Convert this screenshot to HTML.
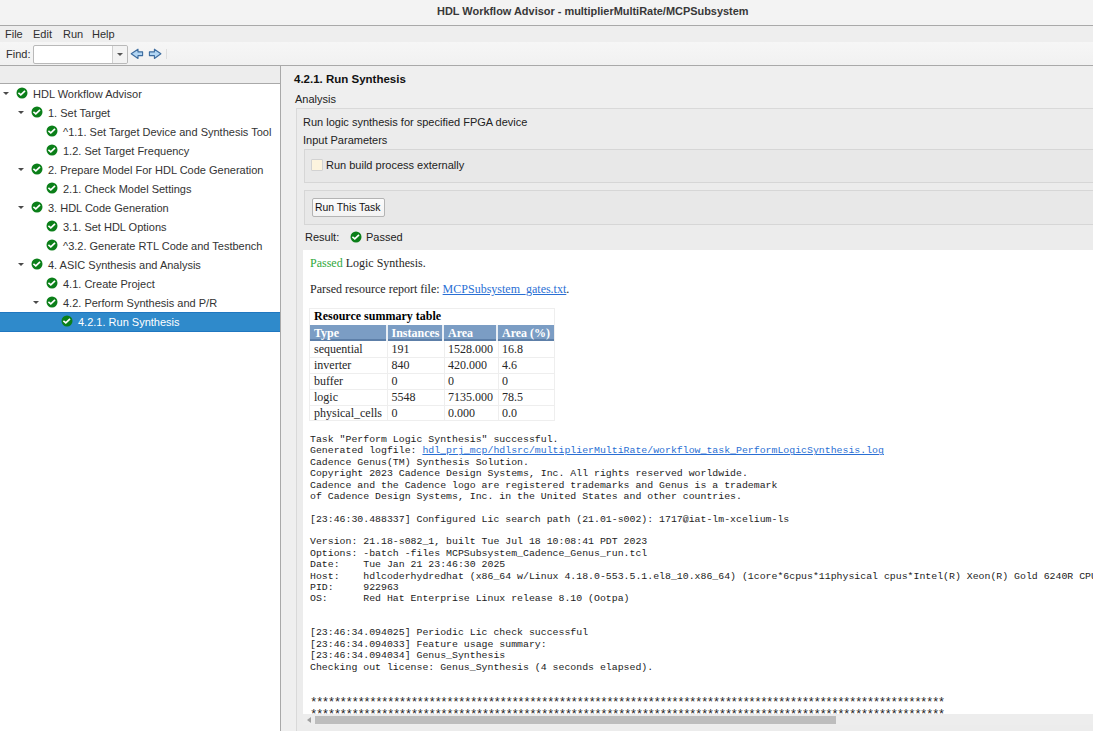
<!DOCTYPE html>
<html><head><meta charset="utf-8">
<style>
html,body{margin:0;padding:0;}
body{width:1093px;height:731px;overflow:hidden;position:relative;background:#efefef;font-family:"Liberation Sans",sans-serif;font-size:11px;color:#2e2e2e;}
.a{position:absolute;white-space:pre;line-height:13px;}
.bx{position:absolute;box-sizing:border-box;}
.ic{position:absolute;width:12px;height:12px;}
.exp{position:absolute;width:0;height:0;border-left:3px solid transparent;border-right:3px solid transparent;border-top:3.5px solid #4a4a4a;}
.tr{position:absolute;white-space:pre;line-height:13px;color:#333;}
.ser{position:absolute;white-space:pre;font-family:"Liberation Serif",serif;font-size:12px;line-height:14px;color:#262626;}
.mono{position:absolute;left:310px;top:434px;white-space:pre;font-family:"Liberation Mono",monospace;font-size:9.87px;line-height:11.37px;color:#222;}
table.rs{position:absolute;left:309px;top:308px;border-collapse:collapse;font-family:"Liberation Serif",serif;font-size:12px;color:#111;}
</style></head><body>
<!-- title bar -->
<div class="bx" style="left:0;top:0;width:1093px;height:26px;background:#f3f3f3;border-bottom:1px solid #a9a9a9;"></div>
<div class="a" style="left:437px;top:5px;font-weight:bold;font-size:10.95px;color:#383838;">HDL Workflow Advisor - multiplierMultiRate/MCPSubsystem</div>
<!-- menu bar -->
<div class="bx" style="left:0;top:26px;width:1093px;height:16px;background:#eeeeee;"></div>
<div class="a" style="left:5px;top:28px;">File</div>
<div class="a" style="left:33px;top:28px;">Edit</div>
<div class="a" style="left:63px;top:28px;">Run</div>
<div class="a" style="left:92px;top:28px;">Help</div>
<!-- toolbar -->
<div class="bx" style="left:0;top:42px;width:1093px;height:24px;background:linear-gradient(#f6f6f6,#f1f1f1);border-bottom:1px solid #a9a9a9;"></div>
<div class="a" style="left:6px;top:48px;">Find:</div>
<div class="bx" style="left:33px;top:45px;width:95px;height:19px;background:#fff;border:1px solid #b9b9b9;border-radius:2px;"></div>
<div class="bx" style="left:112px;top:46px;width:15px;height:17px;background:#f3f3f3;border-left:1px solid #d0d0d0;border-radius:0 2px 2px 0;"></div>
<div class="exp" style="left:117px;top:53px;border-top-color:#555;"></div>
<svg class="ic" style="left:130px;top:48px;width:14px;height:12px" viewBox="0 0 14 12"><path d="M1.2 5.8 L8 1.2 L8 3.9 L12.6 3.9 L12.6 7.6 L8 7.6 L8 10.5 Z" fill="#b3d6f3" stroke="#3d6c9f" stroke-width="1.1" stroke-linejoin="round"/></svg>
<svg class="ic" style="left:148px;top:48px;width:14px;height:12px" viewBox="0 0 14 12"><path d="M12.9 5.8 L6.4 1.2 L6.4 3.9 L1.4 3.9 L1.4 7.6 L6.4 7.6 L6.4 10.5 Z" fill="#b3d6f3" stroke="#3d6c9f" stroke-width="1.1" stroke-linejoin="round"/></svg>
<div class="bx" style="left:166px;top:49px;width:1px;height:10px;background:#dedede;"></div>

<!-- left panel -->
<div class="bx" style="left:0;top:66px;width:281px;height:18px;background:#ededed;border-bottom:1px solid #a9a9a9;"></div>
<div class="bx" style="left:0;top:84px;width:280px;height:647px;background:#ffffff;"></div>
<div class="bx" style="left:280px;top:65px;width:1px;height:666px;background:#a9a9a9;"></div>
<div class="exp" style="left:2.7px;top:91.9px"></div>
<svg class="ic" style="left:16.0px;top:87.4px" viewBox="0 0 12 12"><circle cx="6" cy="6" r="5.5" fill="#0b7f19"/><path d="M2.4 5.9 L4.8 7.8 L9.0 3.9" fill="none" stroke="#fff" stroke-width="1.7"/></svg>
<div class="tr" style="left:33px;top:87.5px;color:#333333">HDL Workflow Advisor</div>
<div class="exp" style="left:17.7px;top:110.9px"></div>
<svg class="ic" style="left:31.0px;top:106.4px" viewBox="0 0 12 12"><circle cx="6" cy="6" r="5.5" fill="#0b7f19"/><path d="M2.4 5.9 L4.8 7.8 L9.0 3.9" fill="none" stroke="#fff" stroke-width="1.7"/></svg>
<div class="tr" style="left:48px;top:106.5px;color:#333333">1. Set Target</div>
<svg class="ic" style="left:46.0px;top:125.4px" viewBox="0 0 12 12"><circle cx="6" cy="6" r="5.5" fill="#0b7f19"/><path d="M2.4 5.9 L4.8 7.8 L9.0 3.9" fill="none" stroke="#fff" stroke-width="1.7"/></svg>
<div class="tr" style="left:63px;top:125.5px;color:#333333">^1.1. Set Target Device and Synthesis Tool</div>
<svg class="ic" style="left:46.0px;top:144.4px" viewBox="0 0 12 12"><circle cx="6" cy="6" r="5.5" fill="#0b7f19"/><path d="M2.4 5.9 L4.8 7.8 L9.0 3.9" fill="none" stroke="#fff" stroke-width="1.7"/></svg>
<div class="tr" style="left:63px;top:144.5px;color:#333333">1.2. Set Target Frequency</div>
<div class="exp" style="left:17.7px;top:167.9px"></div>
<svg class="ic" style="left:31.0px;top:163.4px" viewBox="0 0 12 12"><circle cx="6" cy="6" r="5.5" fill="#0b7f19"/><path d="M2.4 5.9 L4.8 7.8 L9.0 3.9" fill="none" stroke="#fff" stroke-width="1.7"/></svg>
<div class="tr" style="left:48px;top:163.5px;color:#333333">2. Prepare Model For HDL Code Generation</div>
<svg class="ic" style="left:46.0px;top:182.4px" viewBox="0 0 12 12"><circle cx="6" cy="6" r="5.5" fill="#0b7f19"/><path d="M2.4 5.9 L4.8 7.8 L9.0 3.9" fill="none" stroke="#fff" stroke-width="1.7"/></svg>
<div class="tr" style="left:63px;top:182.5px;color:#333333">2.1. Check Model Settings</div>
<div class="exp" style="left:17.7px;top:205.9px"></div>
<svg class="ic" style="left:31.0px;top:201.4px" viewBox="0 0 12 12"><circle cx="6" cy="6" r="5.5" fill="#0b7f19"/><path d="M2.4 5.9 L4.8 7.8 L9.0 3.9" fill="none" stroke="#fff" stroke-width="1.7"/></svg>
<div class="tr" style="left:48px;top:201.5px;color:#333333">3. HDL Code Generation</div>
<svg class="ic" style="left:46.0px;top:220.4px" viewBox="0 0 12 12"><circle cx="6" cy="6" r="5.5" fill="#0b7f19"/><path d="M2.4 5.9 L4.8 7.8 L9.0 3.9" fill="none" stroke="#fff" stroke-width="1.7"/></svg>
<div class="tr" style="left:63px;top:220.5px;color:#333333">3.1. Set HDL Options</div>
<svg class="ic" style="left:46.0px;top:239.4px" viewBox="0 0 12 12"><circle cx="6" cy="6" r="5.5" fill="#0b7f19"/><path d="M2.4 5.9 L4.8 7.8 L9.0 3.9" fill="none" stroke="#fff" stroke-width="1.7"/></svg>
<div class="tr" style="left:63px;top:239.5px;color:#333333">^3.2. Generate RTL Code and Testbench</div>
<div class="exp" style="left:17.7px;top:262.9px"></div>
<svg class="ic" style="left:31.0px;top:258.4px" viewBox="0 0 12 12"><circle cx="6" cy="6" r="5.5" fill="#0b7f19"/><path d="M2.4 5.9 L4.8 7.8 L9.0 3.9" fill="none" stroke="#fff" stroke-width="1.7"/></svg>
<div class="tr" style="left:48px;top:258.5px;color:#333333">4. ASIC Synthesis and Analysis</div>
<svg class="ic" style="left:46.0px;top:277.4px" viewBox="0 0 12 12"><circle cx="6" cy="6" r="5.5" fill="#0b7f19"/><path d="M2.4 5.9 L4.8 7.8 L9.0 3.9" fill="none" stroke="#fff" stroke-width="1.7"/></svg>
<div class="tr" style="left:63px;top:277.5px;color:#333333">4.1. Create Project</div>
<div class="exp" style="left:32.7px;top:300.9px"></div>
<svg class="ic" style="left:46.0px;top:296.4px" viewBox="0 0 12 12"><circle cx="6" cy="6" r="5.5" fill="#0b7f19"/><path d="M2.4 5.9 L4.8 7.8 L9.0 3.9" fill="none" stroke="#fff" stroke-width="1.7"/></svg>
<div class="tr" style="left:63px;top:296.5px;color:#333333">4.2. Perform Synthesis and P/R</div>
<div class="bx" style="left:0;top:312px;width:280px;height:20px;background:#2f8acb;border-top:1px solid #1f77c0;border-bottom:1px solid #1f77c0;"></div>
<svg class="ic" style="left:61.0px;top:315.4px" viewBox="0 0 12 12"><circle cx="6" cy="6" r="5.5" fill="#0b7f19"/><path d="M2.4 5.9 L4.8 7.8 L9.0 3.9" fill="none" stroke="#fff" stroke-width="1.7"/></svg>
<div class="tr" style="left:78px;top:315.5px;color:#ffffff">4.2.1. Run Synthesis</div>

<!-- right panel -->
<div class="a" style="left:294px;top:73px;font-weight:bold;font-size:11.5px;color:#111;">4.2.1. Run Synthesis</div>
<div class="a" style="left:295px;top:92.5px;color:#222;">Analysis</div>
<div class="bx" style="left:296px;top:108px;width:900px;height:630px;background:#ececec;border:1px solid #d9d9d9;"></div>
<div class="a" style="left:303px;top:115.5px;color:#222;">Run logic synthesis for specified FPGA device</div>
<div class="a" style="left:303px;top:134px;color:#222;">Input Parameters</div>
<div class="bx" style="left:304px;top:149px;width:900px;height:34px;background:#e8e8e8;border:1px solid #d6d6d6;"></div>
<div class="bx" style="left:311px;top:159px;width:12px;height:12px;background:#fdf4de;border:1px solid #d2d2d2;border-radius:1px;"></div>
<div class="a" style="left:326px;top:159px;color:#222;">Run build process externally</div>
<div class="bx" style="left:304px;top:190px;width:900px;height:35px;background:#e8e8e8;border:1px solid #d6d6d6;"></div>
<div class="bx" style="left:312px;top:198px;width:73px;height:19px;background:linear-gradient(#fbfbfb,#f3f3f3);border:1px solid #b4b4b4;border-radius:2px;"></div>
<div class="a" style="left:315px;top:201px;color:#111;font-size:10.4px;">Run This Task</div>
<div class="a" style="left:305px;top:231px;color:#222;">Result:</div>
<svg class="ic" style="left:349.5px;top:231.0px" viewBox="0 0 12 12"><circle cx="6" cy="6" r="5.5" fill="#0b7f19"/><path d="M2.4 5.9 L4.8 7.8 L9.0 3.9" fill="none" stroke="#fff" stroke-width="1.7"/></svg>
<div class="a" style="left:366px;top:231px;color:#222;">Passed</div>

<!-- white report box -->
<div class="bx" style="left:303px;top:250px;width:800px;height:475px;background:#ffffff;"></div>
<div class="ser" style="left:310px;top:256px;"><span style="color:#30a83c">Passed</span> Logic Synthesis.</div>
<div class="ser" style="left:310px;top:282px;">Parsed resource report file: <span style="color:#2a6fd4;text-decoration:underline">MCPSubsystem_gates.txt</span>.</div>
<div class="bx" style="left:309px;top:308px;width:246px;height:113px;border:1px solid #eeeeee;background:#fff"></div>
<div class="ser" style="left:314px;top:309.1px;font-weight:bold;color:#000">Resource summary table</div>
<div class="bx" style="left:310px;top:325px;width:244px;height:16px;background:#7b9dc4;border-bottom:2px solid #5d7fa8"></div>
<div class="bx" style="left:386px;top:325px;width:2px;height:16px;background:#e8eef5"></div>
<div class="bx" style="left:442px;top:325px;width:2px;height:16px;background:#e8eef5"></div>
<div class="bx" style="left:496px;top:325px;width:2px;height:16px;background:#e8eef5"></div>
<div class="ser" style="left:314.0px;top:325.6px;font-weight:bold;color:#fff">Type</div>
<div class="ser" style="left:391.5px;top:325.6px;font-weight:bold;color:#fff">Instances</div>
<div class="ser" style="left:448.0px;top:325.6px;font-weight:bold;color:#fff">Area</div>
<div class="ser" style="left:502.0px;top:325.6px;font-weight:bold;color:#fff">Area (%)</div>
<div class="bx" style="left:310px;top:357px;width:244px;height:1px;background:#eeeeee"></div>
<div class="ser" style="left:314.0px;top:341.8px">sequential</div>
<div class="ser" style="left:391.5px;top:341.8px">191</div>
<div class="ser" style="left:448.0px;top:341.8px">1528.000</div>
<div class="ser" style="left:502.0px;top:341.8px">16.8</div>
<div class="bx" style="left:310px;top:373px;width:244px;height:1px;background:#eeeeee"></div>
<div class="ser" style="left:314.0px;top:357.8px">inverter</div>
<div class="ser" style="left:391.5px;top:357.8px">840</div>
<div class="ser" style="left:448.0px;top:357.8px">420.000</div>
<div class="ser" style="left:502.0px;top:357.8px">4.6</div>
<div class="bx" style="left:310px;top:389px;width:244px;height:1px;background:#eeeeee"></div>
<div class="ser" style="left:314.0px;top:373.8px">buffer</div>
<div class="ser" style="left:391.5px;top:373.8px">0</div>
<div class="ser" style="left:448.0px;top:373.8px">0</div>
<div class="ser" style="left:502.0px;top:373.8px">0</div>
<div class="bx" style="left:310px;top:405px;width:244px;height:1px;background:#eeeeee"></div>
<div class="ser" style="left:314.0px;top:389.8px">logic</div>
<div class="ser" style="left:391.5px;top:389.8px">5548</div>
<div class="ser" style="left:448.0px;top:389.8px">7135.000</div>
<div class="ser" style="left:502.0px;top:389.8px">78.5</div>
<div class="ser" style="left:314.0px;top:405.8px">physical_cells</div>
<div class="ser" style="left:391.5px;top:405.8px">0</div>
<div class="ser" style="left:448.0px;top:405.8px">0.000</div>
<div class="ser" style="left:502.0px;top:405.8px">0.0</div>
<div class="bx" style="left:387px;top:341px;width:1px;height:80px;background:#eeeeee"></div>
<div class="bx" style="left:444px;top:341px;width:1px;height:80px;background:#eeeeee"></div>
<div class="bx" style="left:498px;top:341px;width:1px;height:80px;background:#eeeeee"></div>
<div class="mono" id="log">Task "Perform Logic Synthesis" successful.
Generated logfile: <span style="color:#2a6fd4;text-decoration:underline">hdl_prj_mcp/hdlsrc/multiplierMultiRate/workflow_task_PerformLogicSynthesis.log</span>
Cadence Genus(TM) Synthesis Solution.
Copyright 2023 Cadence Design Systems, Inc. All rights reserved worldwide.
Cadence and the Cadence logo are registered trademarks and Genus is a trademark
of Cadence Design Systems, Inc. in the United States and other countries.

[23:46:30.488337] Configured Lic search path (21.01-s002): 1717@iat-lm-xcelium-ls

Version: 21.18-s082_1, built Tue Jul 18 10:08:41 PDT 2023
Options: -batch -files MCPSubsystem_Cadence_Genus_run.tcl
Date:    Tue Jan 21 23:46:30 2025
Host:    hdlcoderhydredhat (x86_64 w/Linux 4.18.0-553.5.1.el8_10.x86_64) (1core*6cpus*11physical cpus*Intel(R) Xeon(R) Gold 6240R CPU @ 2.40GHz 35750KB)
PID:     922963
OS:      Red Hat Enterprise Linux release 8.10 (Ootpa)


[23:46:34.094025] Periodic Lic check successful
[23:46:34.094033] Feature usage summary:
[23:46:34.094034] Genus_Synthesis
Checking out license: Genus_Synthesis (4 seconds elapsed).


<span style="position:relative;top:2.5px;font-size:12.5px;letter-spacing:-1.578px">***********************************************************************************************************
***********************************************************************************************************</span></div>

<!-- scrollbar -->
<div class="bx" style="left:303px;top:714px;width:800px;height:11px;background:#ededed;"></div>
<div class="bx" style="left:315px;top:716px;width:521px;height:8px;background:#bdbdbd;"></div>
<div class="bx" style="left:307px;top:717px;width:0;height:0;border-top:3px solid transparent;border-bottom:3px solid transparent;border-right:4px solid #a0a0a0;"></div>
</body></html>
